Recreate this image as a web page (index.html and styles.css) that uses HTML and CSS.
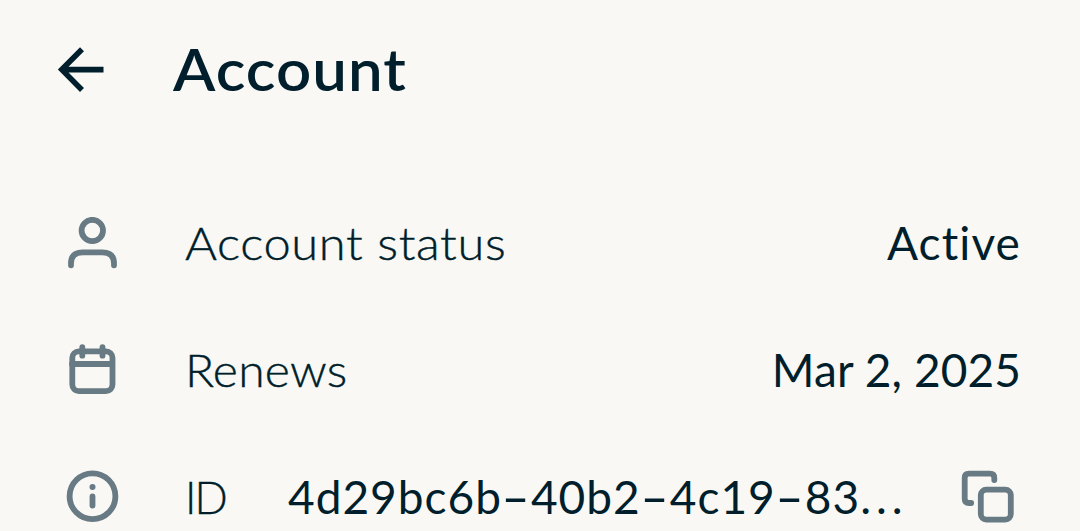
FILE: index.html
```html
<!DOCTYPE html>
<html lang="en">
<head>
  <meta charset="utf-8">
  <title>Account</title>
  <link rel="stylesheet" href="styles.css">
</head>
<body>
  <header class="header">
    <svg class="back" viewBox="0 0 48 48">
      <path d="M25 3.2 L4.8 23.6 L25 44 M4.8 23.6 H46.5"/>
    </svg>
    <h1 class="title">Account</h1>
  </header>

  <main class="list">
    <div class="row">
      <svg class="icon" viewBox="0 0 54 54">
        <circle cx="27.3" cy="13.5" r="10.7"/>
        <path d="M6 48.3 V46.5 Q6 35.3 17.5 35.3 H37.5 Q49 35.3 49 46.5 V48.3"/>
      </svg>
      <span class="label status-label">Account status</span>
      <span class="value status">Active</span>
    </div>

    <div class="row">
      <svg class="icon" viewBox="0 0 54 54">
        <rect x="7.3" y="7.3" width="40.2" height="39.8" rx="6.5"/>
        <path d="M7 20 H47 M17.3 3.2 V11.7 M37.5 3.2 V11.7"/>
      </svg>
      <span class="label renews-label">Renews</span>
      <span class="value renews">Mar 2, 2025</span>
    </div>

    <div class="row last">
      <svg class="icon" viewBox="0 0 54 54">
        <circle cx="27.5" cy="26.2" r="22.9"/>
        <circle class="dot" cx="27.5" cy="17" r="3"/>
        <path d="M27.5 26.5 V35.5"/>
      </svg>
      <span class="label id-label">ID</span>
      <span class="value id">4d29bc6b<span class="dash">-</span>40b2<span class="dash">-</span>4c19<span class="dash">-</span>83<span class="more">...</span></span>
      <svg class="icon copy" viewBox="0 0 54 54">
        <rect x="20.8" y="19.6" width="30" height="30" rx="5.5"/>
        <path d="M34.3 10 V8 Q34.3 3.7 30 3.7 H9 Q4.7 3.7 4.7 8 V28.5 Q4.7 33 9 33 H11.2"/>
      </svg>
    </div>
  </main>
</body>
</html>
```

FILE: styles.css
```css
body {
  margin: 0;
  background-color: #f9f8f4;
  color: #001e2b;
  font-family: Lato, sans-serif;
}

.header {
  display: flex;
  align-items: center;
  height: 140px;
  padding-left: 57px;
}

.back {
  width: 48px;
  height: 48px;
  fill: none;
  stroke: currentColor;
  stroke-width: 5.6;
}

.title {
  margin: 0 0 0 68px;
  padding-bottom: 2px;
  font-size: 58px;
  font-weight: 600;
  line-height: 70px;
  letter-spacing: 1px;
  transform: scaleX(1.065);
  transform-origin: left;
}

.list {
  padding: 40px 60px 0 65px;
}

.row {
  display: flex;
  align-items: center;
  height: 127px;
  font-size: 46px;
  line-height: 56px;
  white-space: nowrap;
}

.last {
  height: 97px;
  box-sizing: border-box;
  padding-top: 29px;
}

.icon {
  flex: none;
  width: 54px;
  height: 54px;
  fill: none;
  stroke: #687a83;
  stroke-width: 5.8;
  stroke-linecap: round;
}

.icon .dot {
  fill: #687a83;
  stroke: none;
}

.label,
.value {
  padding-bottom: 2px;
}

.label {
  margin-left: 66px;
  font-weight: 300;
  transform-origin: left;
  -webkit-text-stroke: 0.4px #001e2b;
}

.status-label {
  letter-spacing: 0.6px;
  transform: scaleX(1.062);
}

.renews-label {
  letter-spacing: 0.2px;
  transform: scaleX(1.045);
}

.id-label {
  letter-spacing: -2px;
  transform: scaleX(0.95);
}

.value {
  margin-left: auto;
  font-weight: 400;
}

.status {
  margin-right: -1px;
  letter-spacing: 1.1px;
}

.renews {
  margin-right: -1px;
  letter-spacing: 0.1px;
}

.last .label,
.last .value {
  padding-bottom: 0;
}

.id {
  margin-left: 60px;
  letter-spacing: 1px;
}

.dash {
  display: inline-block;
  width: 29px;
  text-align: center;
  transform: scaleX(1.7);
}

.more {
  letter-spacing: 5px;
}

.copy {
  margin-left: auto;
  margin-right: 6px;
}
```
